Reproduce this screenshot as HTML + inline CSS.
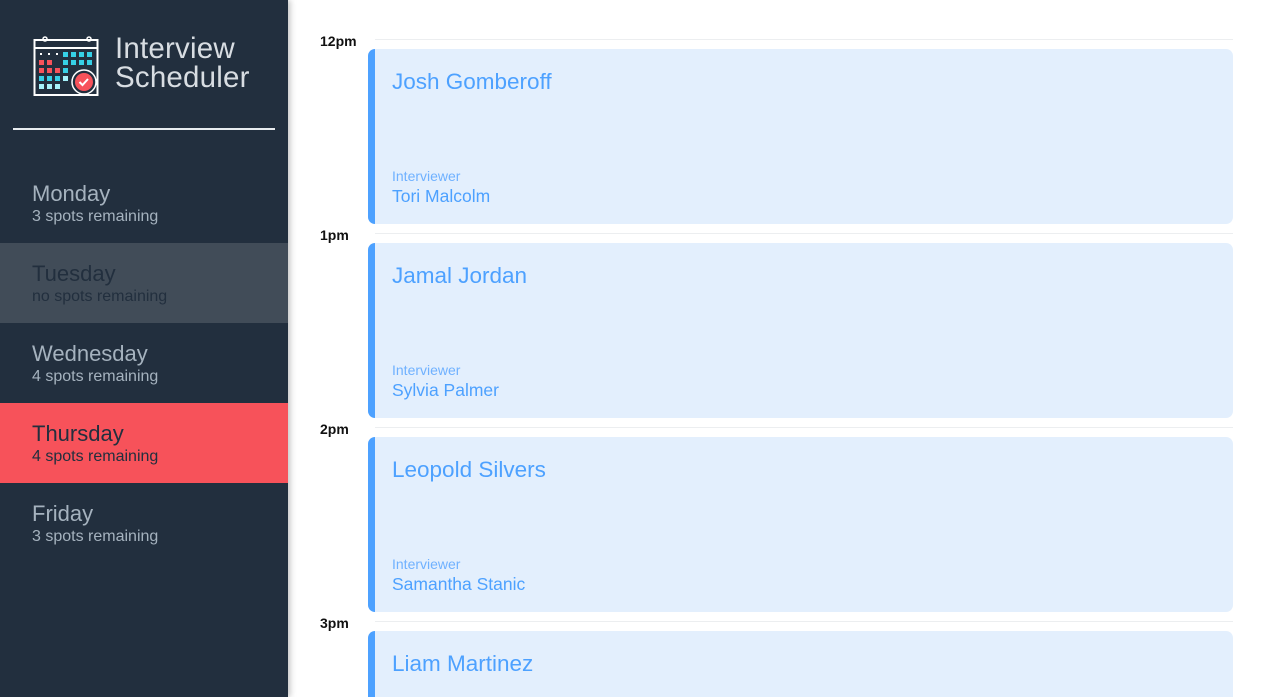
<!DOCTYPE html>
<html><head><meta charset="utf-8"><style>
*{margin:0;padding:0;box-sizing:border-box}
html,body{width:1265px;height:697px;overflow:hidden}
body{background:#fff;font-family:"Liberation Sans",sans-serif;position:relative}
.side{position:absolute;left:0;top:0;width:288px;height:697px;background:#222f3e;box-shadow:2px 0 6px rgba(0,0,0,.25);z-index:2}
.title{position:absolute;left:115px;top:34px;color:#d8dde2;font-size:29.5px;line-height:29px;letter-spacing:.2px}
.hr{position:absolute;left:13px;top:128px;width:262px;height:2px;background:#e8ecef}
.day{position:absolute;left:0;width:288px;height:80px;padding-left:32px}
.day .n{position:absolute;top:18px;font-size:22px;color:#a5b2be}
.day .s{position:absolute;top:45px;font-size:16px;color:#a5b2be}
.tue{background:#414c58}.tue .n,.tue .s{color:#222f3e}
.thu{background:#f7525a}.thu .n,.thu .s{color:#222f3e}
.time{position:absolute;left:320px;font-size:14px;font-weight:bold;color:#111}
.line{position:absolute;left:375px;width:858px;height:1px;background:#eceef0}
.card{position:absolute;left:368px;width:865px;height:175px;background:#e3effd;border-left:7px solid #4da1ff;border-radius:7px}
.card .nm{position:absolute;left:17px;top:20px;font-size:22.5px;color:#4da1ff}
.card .iv{position:absolute;left:17px;top:119px;font-size:14px;color:#6fb1ff}
.card .in{position:absolute;left:17px;top:137px;font-size:17.5px;color:#4da1ff}
</style></head><body>
<div class="side">
<svg style="position:absolute;left:33px;top:34px" width="66" height="63" viewBox="0 0 66 63">
<rect x="1.5" y="6" width="63" height="55" fill="none" stroke="#fff" stroke-width="2"/>
<line x1="1.5" y1="14" x2="64.5" y2="14" stroke="#fff" stroke-width="2"/>
<circle cx="12" cy="5" r="2" fill="none" stroke="#fff" stroke-width="1.5"/><circle cx="56" cy="5" r="2" fill="none" stroke="#fff" stroke-width="1.5"/>
<g fill="#fff"><rect x="7" y="19" width="2" height="2"/><rect x="15" y="19" width="2" height="2"/><rect x="23" y="19" width="2" height="2"/></g>
<g fill="#36d0e6"><rect x="30" y="18" width="5" height="5"/><rect x="38" y="18" width="5" height="5"/><rect x="46" y="18" width="5" height="5"/><rect x="54" y="18" width="5" height="5"/>
<rect x="30" y="26" width="5" height="5"/><rect x="38" y="26" width="5" height="5"/><rect x="46" y="26" width="5" height="5"/><rect x="54" y="26" width="5" height="5"/>
<rect x="30" y="34" width="5" height="5"/><rect x="6" y="42" width="5" height="5"/><rect x="14" y="42" width="5" height="5"/><rect x="22" y="42" width="5" height="5"/></g>
<g fill="#f7525a"><rect x="6" y="26" width="5" height="5"/><rect x="14" y="26" width="5" height="5"/><rect x="6" y="34" width="5" height="5"/><rect x="14" y="34" width="5" height="5"/><rect x="22" y="34" width="5" height="5"/></g>
<g fill="#a6f2fb"><rect x="30" y="42" width="5" height="5"/><rect x="6" y="50" width="5" height="5"/><rect x="14" y="50" width="5" height="5"/><rect x="22" y="50" width="5" height="5"/></g>
<circle cx="51" cy="48" r="12" fill="#222f3e" stroke="#fff" stroke-width="1.5"/><circle cx="51" cy="48" r="9" fill="#f7525a"/>
<path d="M46.5 48l3 3 5.5-6" fill="none" stroke="#fff" stroke-width="2"/>
</svg>
<div class="title">Interview<br>Scheduler</div>
<div class="hr"></div>
<div class="day" style="top:163px"><div class="n">Monday</div><div class="s">3 spots remaining</div></div>
<div class="day tue" style="top:243px"><div class="n">Tuesday</div><div class="s">no spots remaining</div></div>
<div class="day" style="top:323px"><div class="n">Wednesday</div><div class="s">4 spots remaining</div></div>
<div class="day thu" style="top:403px"><div class="n">Thursday</div><div class="s">4 spots remaining</div></div>
<div class="day" style="top:483px"><div class="n">Friday</div><div class="s">3 spots remaining</div></div>
</div>

<div class="time" style="top:33px">12pm</div><div class="line" style="top:39px"></div>
<div class="card" style="top:49px"><div class="nm">Josh Gomberoff</div><div class="iv">Interviewer</div><div class="in">Tori Malcolm</div></div>
<div class="time" style="top:227px">1pm</div><div class="line" style="top:233px"></div>
<div class="card" style="top:243px"><div class="nm">Jamal Jordan</div><div class="iv">Interviewer</div><div class="in">Sylvia Palmer</div></div>
<div class="time" style="top:421px">2pm</div><div class="line" style="top:427px"></div>
<div class="card" style="top:437px"><div class="nm">Leopold Silvers</div><div class="iv">Interviewer</div><div class="in">Samantha Stanic</div></div>
<div class="time" style="top:615px">3pm</div><div class="line" style="top:621px"></div>
<div class="card" style="top:631px;height:66px;border-radius:7px 7px 0 0"><div class="nm">Liam Martinez</div></div>
</body></html>
